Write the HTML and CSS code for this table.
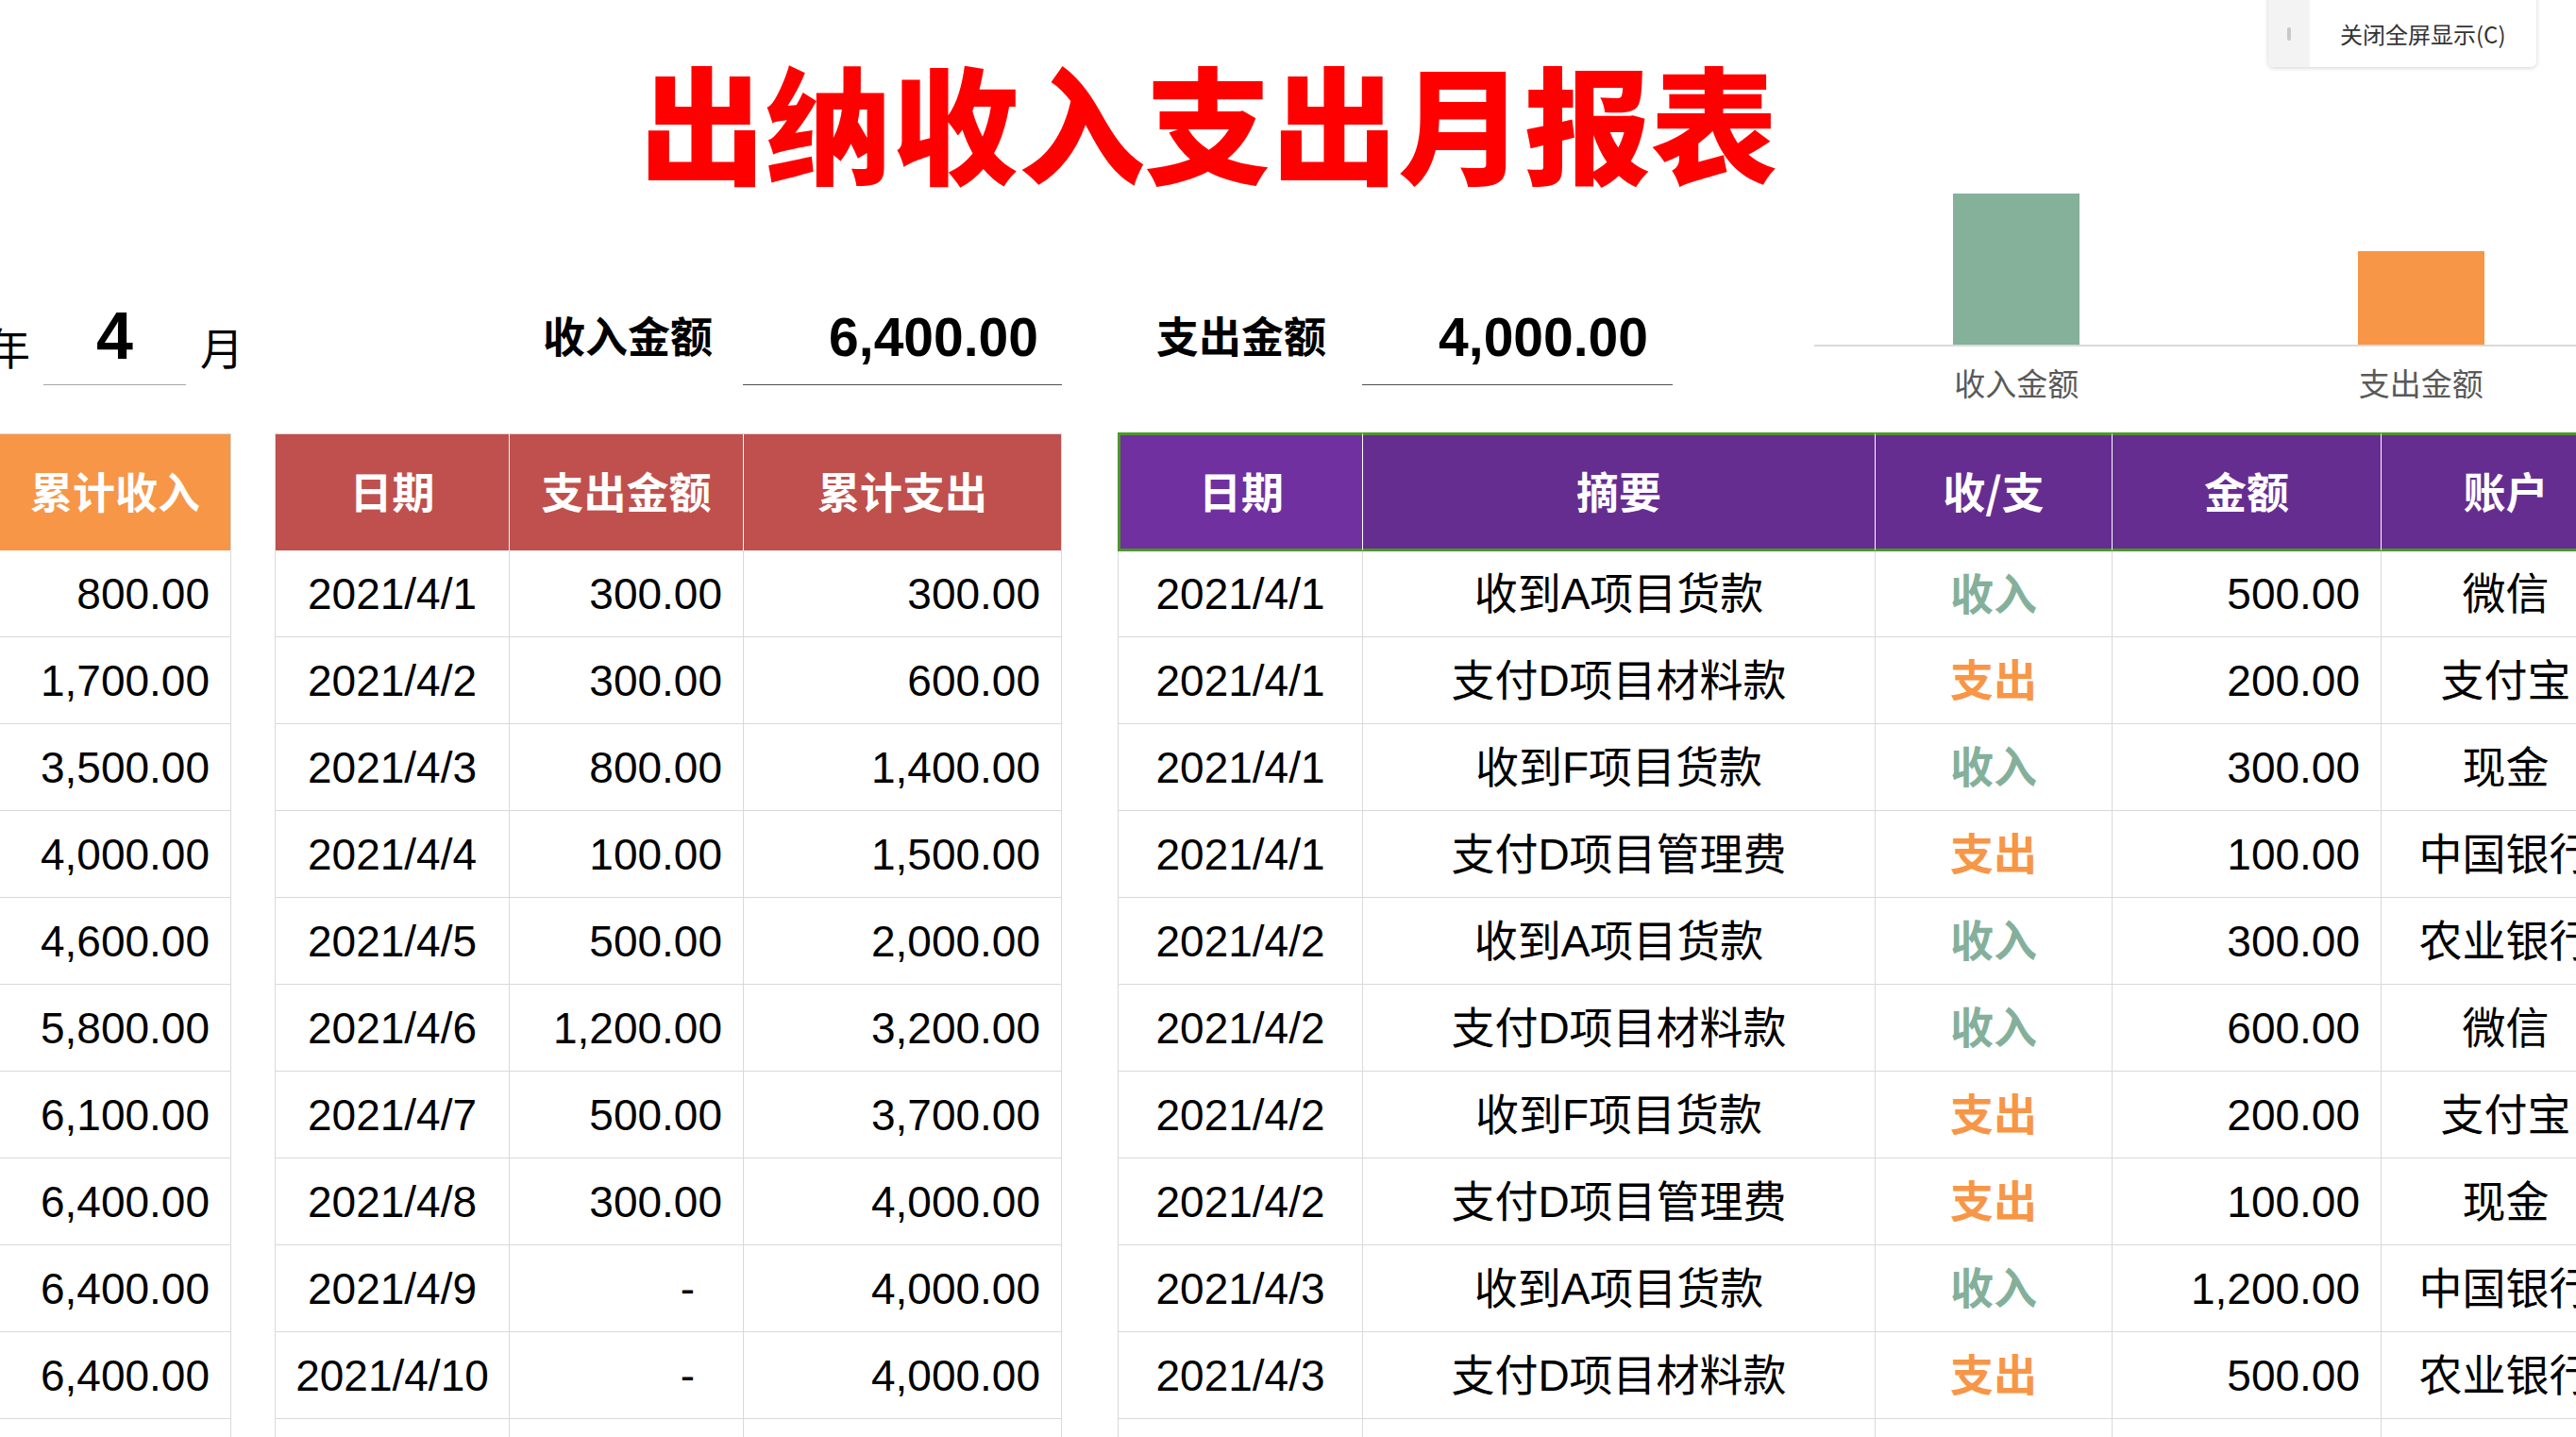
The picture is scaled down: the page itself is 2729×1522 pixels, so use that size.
FILE: index.html
```html
<!DOCTYPE html>
<html lang="zh-CN">
<head>
<meta charset="utf-8">
<title>出纳收入支出月报表</title>
<link rel="stylesheet" href="styles.css">
</head>
<body>
<header class="top">
  <div class="title-bar"><h1 class="title">出纳收入支出月报表</h1></div>
  <div class="info">
    <span class="yr">年</span>
    <span class="m-box">4</span>
    <span class="yue">月</span>
    <span class="lbl lbl-in">收入金额</span>
    <span class="val val-in">6,400.00</span>
    <span class="lbl lbl-out">支出金额</span>
    <span class="val val-out">4,000.00</span>
    <div class="chart">
      <div class="plot">
        <div class="band"><div class="bar bar-in" style="height:160px"></div></div>
        <div class="band"><div class="bar bar-out" style="height:99px"></div></div>
      </div>
      <div class="xlabels"><span>收入金额</span><span>支出金额</span></div>
    </div>
  </div>
</header>

<main class="tables">
  <div class="grid t-cum">
    <div class="c h h-org">累计收入</div>
    <div class="c num">800.00</div>
    <div class="c num">1,700.00</div>
    <div class="c num">3,500.00</div>
    <div class="c num">4,000.00</div>
    <div class="c num">4,600.00</div>
    <div class="c num">5,800.00</div>
    <div class="c num">6,100.00</div>
    <div class="c num">6,400.00</div>
    <div class="c num">6,400.00</div>
    <div class="c num">6,400.00</div>
    <div class="c num"></div>
  </div>

  <div class="grid t-out">
    <div class="c h h-red">日期</div>
    <div class="c h h-red">支出金额</div>
    <div class="c h h-red last">累计支出</div>

    <div class="c">2021/4/1</div><div class="c num">300.00</div><div class="c num">300.00</div>
    <div class="c">2021/4/2</div><div class="c num">300.00</div><div class="c num">600.00</div>
    <div class="c">2021/4/3</div><div class="c num">800.00</div><div class="c num">1,400.00</div>
    <div class="c">2021/4/4</div><div class="c num">100.00</div><div class="c num">1,500.00</div>
    <div class="c">2021/4/5</div><div class="c num">500.00</div><div class="c num">2,000.00</div>
    <div class="c">2021/4/6</div><div class="c num">1,200.00</div><div class="c num">3,200.00</div>
    <div class="c">2021/4/7</div><div class="c num">500.00</div><div class="c num">3,700.00</div>
    <div class="c">2021/4/8</div><div class="c num">300.00</div><div class="c num">4,000.00</div>
    <div class="c">2021/4/9</div><div class="c num dash">-</div><div class="c num">4,000.00</div>
    <div class="c">2021/4/10</div><div class="c num dash">-</div><div class="c num">4,000.00</div>
    <div class="c"></div><div class="c num"></div><div class="c num"></div>
  </div>

  <div class="grid t-main">
    <div class="c h h-pur first">日期</div>
    <div class="c h h-pur">摘要</div>
    <div class="c h h-pur">收/支</div>
    <div class="c h h-pur">金额</div>
    <div class="c h h-pur">账户</div>

    <div class="c f">2021/4/1</div><div class="c">收到A项目货款</div><div class="c in">收入</div><div class="c num">500.00</div><div class="c">微信</div>
    <div class="c f">2021/4/1</div><div class="c">支付D项目材料款</div><div class="c out">支出</div><div class="c num">200.00</div><div class="c">支付宝</div>
    <div class="c f">2021/4/1</div><div class="c">收到F项目货款</div><div class="c in">收入</div><div class="c num">300.00</div><div class="c">现金</div>
    <div class="c f">2021/4/1</div><div class="c">支付D项目管理费</div><div class="c out">支出</div><div class="c num">100.00</div><div class="c">中国银行</div>
    <div class="c f">2021/4/2</div><div class="c">收到A项目货款</div><div class="c in">收入</div><div class="c num">300.00</div><div class="c">农业银行</div>
    <div class="c f">2021/4/2</div><div class="c">支付D项目材料款</div><div class="c in">收入</div><div class="c num">600.00</div><div class="c">微信</div>
    <div class="c f">2021/4/2</div><div class="c">收到F项目货款</div><div class="c out">支出</div><div class="c num">200.00</div><div class="c">支付宝</div>
    <div class="c f">2021/4/2</div><div class="c">支付D项目管理费</div><div class="c out">支出</div><div class="c num">100.00</div><div class="c">现金</div>
    <div class="c f">2021/4/3</div><div class="c">收到A项目货款</div><div class="c in">收入</div><div class="c num">1,200.00</div><div class="c">中国银行</div>
    <div class="c f">2021/4/3</div><div class="c">支付D项目材料款</div><div class="c out">支出</div><div class="c num">500.00</div><div class="c">农业银行</div>
    <div class="c f"></div><div class="c"></div><div class="c"></div><div class="c num"></div><div class="c"></div>
  </div>
</main>

<div class="toast">
  <div class="toast-grip"><span class="grip-line"></span></div>
  <div class="toast-text">关闭全屏显示(C)</div>
</div>
</body>
</html>
```

FILE: styles.css
```css
* { box-sizing: border-box; }
html, body { margin: 0; padding: 0; }
body {
  width: 2729px;
  height: 1522px;
  overflow: hidden;
  position: relative;
  background: #ffffff;
  color: #000000;
  font-family: "Liberation Sans", "Noto Sans CJK SC", sans-serif;
}

/* ---------- top area ---------- */
.title-bar {
  height: 200px;
  padding: 60px 0 0 677px;
}
.title {
  margin: 0;
  font-family: "Noto Sans CJK SC", sans-serif;
  font-weight: 900;
  font-size: 134px;
  line-height: 134px;
  letter-spacing: 0;
  color: #ff0000;
  white-space: nowrap;
}

.info {
  height: 259px;
  display: flex;
  align-items: flex-start;
  margin-left: -14px;
}
.info > * { flex: none; }

.yr, .yue {
  width: 46px;
  margin-top: 143px;
  font-family: "Noto Sans CJK SC", sans-serif;
  font-size: 46px;
  line-height: 46px;
}
.yue { margin-left: 15px; }

.m-box {
  margin-left: 14px;
  width: 151px;
  margin-top: 121px;
  padding-bottom: 16px;
  border-bottom: 1px solid #a6a6a6;
  text-align: center;
  font-weight: 700;
  font-size: 70px;
  line-height: 70px;
}

.lbl {
  width: 180px;
  margin-top: 132px;
  font-family: "Noto Sans CJK SC", sans-serif;
  font-weight: 700;
  font-size: 45px;
  line-height: 45px;
  text-align: center;
}
.lbl-in { margin-left: 317px; }
.lbl-out { margin-left: 100px; }

.val {
  margin-top: 129px;
  padding-bottom: 21px;
  border-bottom: 1px solid #505050;
  text-align: right;
  font-weight: 700;
  font-size: 57px;
  line-height: 57px;
}
.val-in { margin-left: 32px; width: 338px; padding-right: 25px; }
.val-out { margin-left: 38px; width: 329px; padding-right: 26px; }

.chart {
  margin-left: 150px;
  width: 857px;
  display: flex;
  flex-direction: column;
}
.plot {
  height: 167px;
  border-bottom: 2px solid #d9d9d9;
  display: flex;
  align-items: flex-end;
}
.band {
  flex: 1;
  display: flex;
  justify-content: center;
}
.bar { width: 134px; }
.bar-in { background: #85b09a; }
.bar-out { background: #f79646; }
.xlabels {
  display: flex;
  margin-top: 22px;
}
.xlabels span {
  flex: 1;
  text-align: center;
  font-family: "Noto Sans CJK SC", sans-serif;
  font-size: 33px;
  line-height: 33px;
  color: #595959;
}

/* ---------- tables ---------- */
.tables {
  display: flex;
  align-items: flex-start;
}
.grid {
  display: grid;
  flex: none;
}
.t-cum {
  width: 245px;
  grid-template-columns: 245px;
  grid-template-rows: 123px repeat(11, 92px);
  border-top: 1px solid #d9d9d9;
}
.t-out {
  margin-left: 46px;
  grid-template-columns: 248px 248px 337px;
  grid-template-rows: 123px repeat(11, 92px);
  border-top: 1px solid #d9d9d9;
  border-left: 1px solid #d9d9d9;
}
.t-main {
  margin-left: 59px;
  margin-top: -1px;
  grid-template-columns: 260px 543px 251px 285px 264px;
  grid-template-rows: 126px 91px repeat(10, 92px);
}

.c {
  border-right: 1px solid #d9d9d9;
  border-bottom: 1px solid #d9d9d9;
  display: flex;
  align-items: center;
  justify-content: center;
  font-size: 46px;
  line-height: 46px;
  white-space: nowrap;
  overflow: hidden;
}
.c.f { border-left: 1px solid #d9d9d9; }
.num {
  justify-content: flex-end;
  padding-right: 22px;
}
.dash { padding-right: 51px; }

.h {
  color: #ffffff;
  font-family: "Noto Sans CJK SC", sans-serif;
  font-weight: 700;
  font-size: 45px;
  line-height: 45px;
  padding-bottom: 4px;
  border-bottom: none;
}
.h-org { background: #f79646; }
.h-red { background: #c0504d; border-right-color: #ffffff; }
.h-red.last { border-right-color: #d9d9d9; }
.h-pur {
  background: #662d91;
  border-right-color: #ffffff;
  border-top: 3px solid #4c982a;
  border-bottom: 3px solid #4c982a;
}
.h-pur.first {
  background: #7030a0;
  border-left: 3px solid #4c982a;
}

.in, .out {
  font-weight: 700;
  font-family: "Noto Sans CJK SC", sans-serif;
  padding-bottom: 7px;
}
.in { color: #84b09b; }
.out { color: #f79646; }

/* ---------- toast overlay ---------- */
.toast {
  position: absolute;
  top: -8px;
  right: 42px;
  width: 284px;
  height: 79px;
  display: flex;
  background: #ffffff;
  border-radius: 6px;
  box-shadow: 0 1px 5px rgba(0, 0, 0, 0.18);
  overflow: hidden;
}
.toast-grip {
  width: 44px;
  padding-top: 8px;
  background: #f3f3f3;
  display: flex;
  align-items: center;
  justify-content: center;
}
.grip-line {
  width: 4px;
  height: 14px;
  border-radius: 2px;
  background: #c8c8c8;
}
.toast-text {
  padding: 8px 0 0 32px;
  display: flex;
  align-items: center;
  font-family: "Noto Sans CJK SC", sans-serif;
  font-size: 24px;
  color: #333333;
}
```
